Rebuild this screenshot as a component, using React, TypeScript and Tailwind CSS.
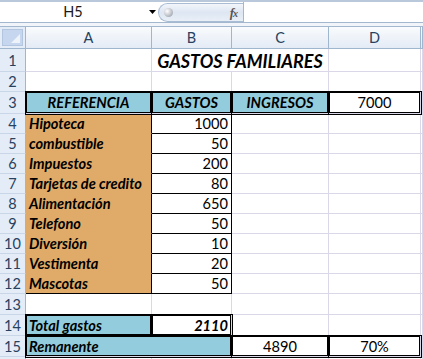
import React from "react";

const ROW = "grid grid-cols-[26px_126px_80px_97px_92px_1fr]";
const RH = "flex items-center justify-center pt-[2px] border-r border-b border-r-[#9eb6ce] border-b-[#c9d6e7] bg-[#e4ecf7] text-[#27415f] text-[14.5px]";
const G = "flex items-center pt-[2px] border-r border-b border-[#dad7e8] overflow-hidden whitespace-nowrap";
const THICK = "relative z-10 shadow-[0_0_0_1px_#000,inset_0_0_0_1px_#000]";

function RowHead({ n }: { n?: number }) {
  return <div className={RH}>{n}</div>;
}

function Empty() {
  return <div className={G} />;
}

const expenses: [string, string][] = [
  ["Hipoteca", "1000"],
  ["combustible", "50"],
  ["Impuestos", "200"],
  ["Tarjetas de credito", "80"],
  ["Alimentación", "650"],
  ["Telefono", "50"],
  ["Diversión", "10"],
  ["Vestimenta", "20"],
  ["Mascotas", "50"],
];

export default function App() {
  return (
    <div className="w-[423px] h-[359px] overflow-hidden bg-white font-['Lato',sans-serif] text-black text-[14.6px] leading-none">
      {/* top strip */}
      <div className="h-[2px] bg-[#b9c8da]" />
      {/* formula bar */}
      <div className="flex h-[21px] bg-white border-b border-[#a3b7cf]">
        <div className="w-[146px] flex items-center justify-center text-[14.5px] text-[#1a1a1a]">H5</div>
        <div className="w-[12px] flex items-center justify-center">
          <svg width="7" height="4" viewBox="0 0 7 4">
            <path d="M0 0h7L3.5 4z" fill="#000" />
          </svg>
        </div>
        <div className="w-[85px] mt-[1px] flex items-center justify-between rounded-l-full border border-r-0 border-[#a8bcd4] bg-gradient-to-b from-[#f3f6fb] via-[#dde6f2] to-[#e9eff7] pl-[5px] pr-[6px]">
          <div className="w-[9px] h-[9px] rounded-full bg-[radial-gradient(circle_at_35%_35%,#ffffff,#b9bdc4_60%,#8d939c)]" />
          <span className="font-['Liberation_Serif',serif] italic font-bold text-[13px] text-[#555] tracking-[-1px]">
            f<span className="text-[10px]">x</span>
          </span>
        </div>
        <div className="flex-1 border-l border-[#a3b7cf] bg-white" />
      </div>
      <div className="h-[4px] bg-[#f1f5fa] border-b border-[#a3b7cf]" />

      {/* column headers */}
      <div className={`${ROW} h-[22px]`}>
        <div className="border-r border-b border-[#9eb6ce] bg-[#e4ecf7] p-[2px]">
          <div className="w-full h-full bg-[#c5d6ee] border border-[#b2c6e0] flex items-end justify-end p-[2px]">
            <svg width="9" height="9" viewBox="0 0 9 9">
              <path d="M9 0V9H0z" fill="#eef3fa" />
            </svg>
          </div>
        </div>
        {["A", "B", "C", "D", ""].map((l, i) => (
          <div
            key={i}
            className="flex items-center justify-center pt-[1px] border-r border-b border-[#9eb6ce] bg-gradient-to-b from-[#f9fbfd] to-[#e4ebf5] text-[#27415f] text-[14.5px]"
          >
            {l}
          </div>
        ))}
      </div>

      {/* row 1 */}
      <div className={`${ROW} h-[23px]`}>
        <RowHead n={1} />
        <Empty />
        <div className={`${G} col-span-2 justify-center font-bold italic text-[18px]`}>GASTOS FAMILIARES</div>
        <Empty />
        <Empty />
      </div>

      {/* row 2 */}
      <div className={`${ROW} h-[20px]`}>
        <RowHead n={2} />
        <Empty />
        <Empty />
        <Empty />
        <Empty />
        <Empty />
      </div>

      {/* row 3 */}
      <div className={`${ROW} h-[22px]`}>
        <RowHead n={3} />
        <div className={`${G} ${THICK} bg-[#93cddd] justify-center font-bold italic`}>REFERENCIA</div>
        <div className={`${G} ${THICK} bg-[#93cddd] justify-center font-bold italic`}>GASTOS</div>
        <div className={`${G} ${THICK} bg-[#93cddd] justify-center font-bold italic`}>INGRESOS</div>
        <div className={`${G} ${THICK} bg-white justify-center`}>7000</div>
        <Empty />
      </div>

      {/* rows 4-12 */}
      {expenses.map(([name, val], i) => (
        <div key={name} className={`${ROW} h-[20px]`}>
          <RowHead n={i + 4} />
          <div
            className={
              i === expenses.length - 1
                ? "flex items-center pt-[2px] border-r border-b border-black bg-[#e0ab68] pl-[3px] font-bold italic whitespace-nowrap overflow-hidden"
                : "flex items-center pt-[2px] border-r border-b border-r-black border-b-[#e0ab68] bg-[#e0ab68] pl-[3px] font-bold italic whitespace-nowrap overflow-hidden"
            }
          >
            {name}
          </div>
          <div className="flex items-center justify-end pt-[2px] border-r border-b border-black bg-white pr-[3px]">{val}</div>
          <Empty />
          <Empty />
          <Empty />
        </div>
      ))}

      {/* row 13 */}
      <div className={`${ROW} h-[21px]`}>
        <RowHead n={13} />
        <Empty />
        <Empty />
        <Empty />
        <Empty />
        <Empty />
      </div>

      {/* row 14 */}
      <div className={`${ROW} h-[21px]`}>
        <RowHead n={14} />
        <div className={`${G} ${THICK} bg-[#93cddd] pl-[3px] font-bold italic`}>Total gastos</div>
        <div className={`${G} ${THICK} bg-white justify-end pr-[3px] font-bold italic`}>2110</div>
        <Empty />
        <Empty />
        <Empty />
      </div>

      {/* row 15 */}
      <div className={`${ROW} h-[21px]`}>
        <RowHead n={15} />
        <div className={`${G} ${THICK} col-span-2 bg-[#93cddd] pl-[3px] font-bold italic`}>Remanente</div>
        <div className={`${G} ${THICK} bg-white justify-center`}>4890</div>
        <div className={`${G} ${THICK} bg-white justify-center`}>70%</div>
        <Empty />
      </div>

      {/* row 16 */}
      <div className={`${ROW} h-[20px]`}>
        <RowHead />
        <Empty />
        <Empty />
        <Empty />
        <Empty />
        <Empty />
      </div>
    </div>
  );
}
